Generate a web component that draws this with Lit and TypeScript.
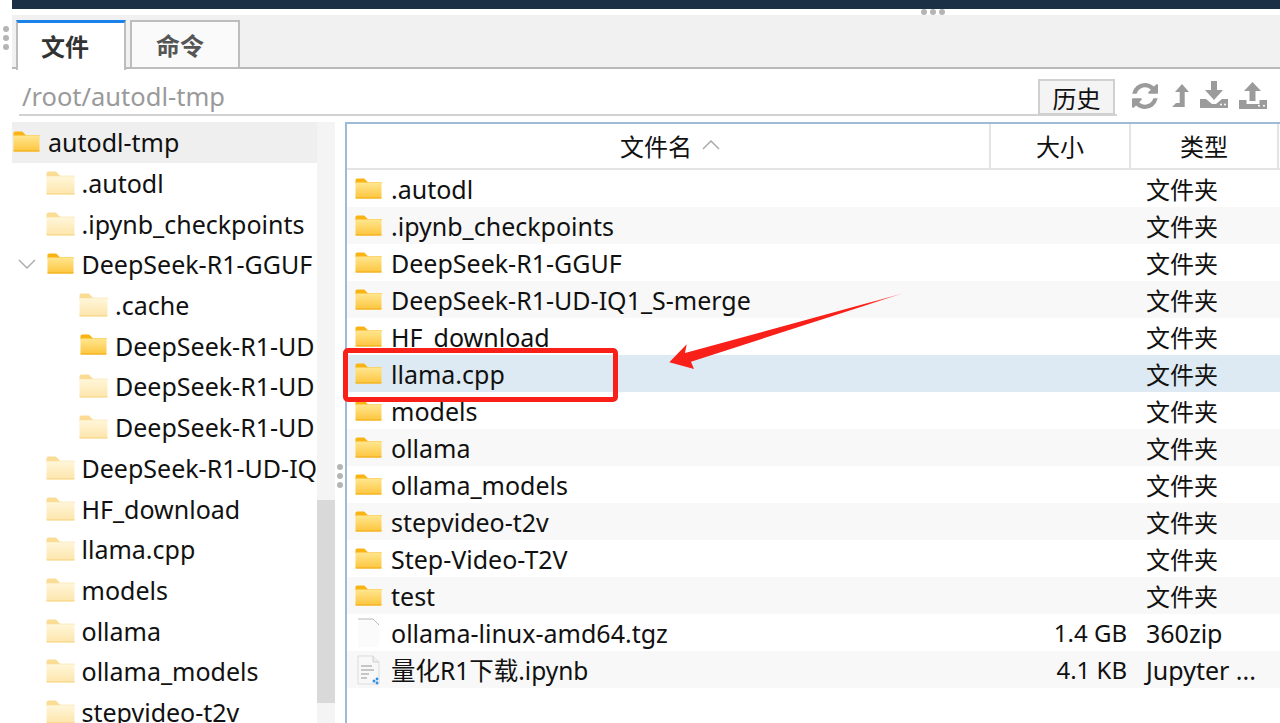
import { LitElement, css, html, svg } from "lit";
import { customElement } from "lit/decorators.js";

type TreeRow = { name: string; depth: number; tone: "solid" | "pale"; open?: boolean; selected?: boolean };
type FileRow = { name: string; size?: string; type: string; icon: "folder" | "blank" | "note"; selected?: boolean };

const treeRows: TreeRow[] = [
  { name: "autodl-tmp", depth: 0, tone: "solid", selected: true },
  { name: ".autodl", depth: 1, tone: "pale" },
  { name: ".ipynb_checkpoints", depth: 1, tone: "pale" },
  { name: "DeepSeek-R1-GGUF", depth: 1, tone: "solid", open: true },
  { name: ".cache", depth: 2, tone: "pale" },
  { name: "DeepSeek-R1-UD", depth: 2, tone: "solid" },
  { name: "DeepSeek-R1-UD", depth: 2, tone: "pale" },
  { name: "DeepSeek-R1-UD", depth: 2, tone: "pale" },
  { name: "DeepSeek-R1-UD-IQ1_S-merge", depth: 1, tone: "pale" },
  { name: "HF_download", depth: 1, tone: "pale" },
  { name: "llama.cpp", depth: 1, tone: "pale" },
  { name: "models", depth: 1, tone: "pale" },
  { name: "ollama", depth: 1, tone: "pale" },
  { name: "ollama_models", depth: 1, tone: "pale" },
  { name: "stepvideo-t2v", depth: 1, tone: "pale" },
];

const fileRows: FileRow[] = [
  { name: ".autodl", type: "文件夹", icon: "folder" },
  { name: ".ipynb_checkpoints", type: "文件夹", icon: "folder" },
  { name: "DeepSeek-R1-GGUF", type: "文件夹", icon: "folder" },
  { name: "DeepSeek-R1-UD-IQ1_S-merge", type: "文件夹", icon: "folder" },
  { name: "HF_download", type: "文件夹", icon: "folder" },
  { name: "llama.cpp", type: "文件夹", icon: "folder", selected: true },
  { name: "models", type: "文件夹", icon: "folder" },
  { name: "ollama", type: "文件夹", icon: "folder" },
  { name: "ollama_models", type: "文件夹", icon: "folder" },
  { name: "stepvideo-t2v", type: "文件夹", icon: "folder" },
  { name: "Step-Video-T2V", type: "文件夹", icon: "folder" },
  { name: "test", type: "文件夹", icon: "folder" },
  { name: "ollama-linux-amd64.tgz", size: "1.4 GB", type: "360zip", icon: "blank" },
  { name: "量化R1下载.ipynb", size: "4.1 KB", type: "Jupyter ...", icon: "note" },
];

const folderIcon = (tone: "solid" | "pale") => {
  const back = tone === "solid" ? "#f9b414" : "#fbdc95";
  const top = tone === "solid" ? "#ffe690" : "#fff6da";
  const bottom = tone === "solid" ? "#fdc53c" : "#fde5ab";
  const edge = tone === "solid" ? "#f2b01e" : "#f9d98f";
  const id = `fold-${tone}`;
  return html`<svg class="folder ${tone}" viewBox="0 0 28 22" preserveAspectRatio="none">
    <defs>
      <linearGradient id=${id} x1="0" y1="0" x2="0" y2="1">
        <stop offset="0" stop-color=${top}></stop>
        <stop offset="1" stop-color=${bottom}></stop>
      </linearGradient>
    </defs>
    <path d="M0.5 5V2.4C0.5 1.3 1.3 0.5 2.4 0.5H9.5L13.5 4.4H27.5V6H0.5z" fill=${back}></path>
    <rect x="0.5" y="4.8" width="27" height="16.7" rx="1.2" fill="url(#${id})"></rect>
    <rect x="0.5" y="20.3" width="27" height="1.2" fill=${edge}></rect>
  </svg>`;
};

const blankIcon = html`<svg class="doc" width="24" height="30" viewBox="0 0 24 30">
  <path d="M2 1h15l6 6v22H2z" fill="#fbfbfb"></path>
  <path d="M2 1h15l6 6" fill="none" stroke="#b9b9b9" stroke-width="1"></path>
</svg>`;

const noteIcon = html`<svg class="doc" width="24" height="30" viewBox="0 0 24 30">
  <path d="M2 1h15l6 6v22H2z" fill="#f8f8f8" stroke="#dcdcdc"></path>
  <path d="M17 1v6h6" fill="#eee" stroke="#cfcfcf"></path>
  <path d="M5 11h11M5 15h13M5 19h8M5 23h6" stroke="#b5b5b5" stroke-width="1.4"></path>
  <circle cx="18" cy="26" r="1.5" fill="#2f8fe0"></circle>
  <circle cx="21" cy="24" r="1.4" fill="#2f8fe0"></circle>
  <circle cx="21" cy="28" r="1.4" fill="#2f8fe0"></circle>
</svg>`;

const toolIcons = [
  {
    w: 26, h: 26, vb: "128 128 1536 1536", top: 14,
    body: svg`<path d="M1639 1056q0 5-1 7-64 268-268 434.5t-478 166.5q-146 0-282.5-55t-243.5-157l-129 129q-19 19-45 19t-45-19-19-45v-448q0-26 19-45t45-19h448q26 0 45 19t19 45-19 45l-137 137q71 66 161 102t187 36q134 0 250-65t186-179q11-17 53-117 8-23 30-23h192q13 0 22.5 9.5t9.5 22.5zm25-800v448q0 26-19 45t-45 19h-448q-26 0-45-19t-19-45 19-45l138-138q-148-137-349-137-134 0-250 65t-186 179q-11 17-53 117-8 23-30 23h-199q-13 0-22.5-9.5t-9.5-22.5v-7q65-268 270-434.5t480-166.5q146 0 284 55.5t245 156.5l130-129q19-19 45-19t45 19 19 45z"/>`,
    gap: 14,
  },
  {
    w: 17, h: 23, vb: "0 0 17 23", top: 15,
    body: svg`<path d="M10 0l7 8h-4.300v15H0l4-4h3.700V8H3z"/>`,
    gap: 11,
  },
  {
    w: 28, h: 27, vb: "0 0 28 27", top: 12,
    body: svg`<path d="M11 0h6v9h6l-9 10-9-10h6zM0 18h6l6 5h4l6-5h6v9H0z"/><circle cx="21" cy="23.500" r="1" fill="#fff"/><circle cx="25" cy="23.500" r="1" fill="#fff"/>`,
    gap: 11,
  },
  {
    w: 28, h: 27, vb: "0 0 28 27", top: 13,
    body: svg`<path d="M13.500 0l8.500 9h-5.500v10h-6V9H5zM0 18h7.500v4h13v-4H28v9H0z"/><circle cx="20" cy="23.800" r="1" fill="#fff"/><circle cx="25" cy="23.800" r="1" fill="#fff"/>`,
    gap: 0,
  },
];

@customElement("app-root")
export class AppRoot extends LitElement {
  static styles = css`
    :host {
      display: block;
      position: relative;
      height: 723px;
      overflow: hidden;
      background: #fff;
      color: #111;
      font-family: "Noto Sans", "Noto Sans CJK SC", sans-serif;
      font-size: 25px;
    }
    .banner {
      height: 9px;
      margin-left: 12px;
      background: #1b3044;
    }
    .shell {
      margin: 6px 0 0 12px;
    }
    .tabs {
      height: 54px;
      background: #f1f1f1;
      border-bottom: 2px solid #b9b9b9;
      display: flex;
      gap: 4px;
      padding: 5px 0 0 4px;
      box-sizing: border-box;
    }
    .tab {
      width: 110px;
      height: 49px;
      box-sizing: border-box;
      border: 2px solid #bdbdbd;
      background: #fafafa;
      display: flex;
      align-items: center;
      justify-content: center;
      padding: 0 10px 0 0;
      font-weight: 700;
      font-size: 24px;
      color: #555;
    }
    .tab.active {
      height: 50px;
      border-top: 3px solid #1a82e8;
      border-bottom: none;
      background: #fff;
      color: #333;
      padding: 0 12px 2px 0;
    }
    .path-row {
      height: 47px;
      margin-left: 7px;
      display: flex;
    }
    .path {
      width: 1098px;
      height: 47px;
      box-sizing: border-box;
      border-bottom: 2px solid #d2d2d2;
      padding: 0 2px 0 3px;
      color: #9a9a9a;
      font-size: 25.500px;
      line-height: 55px;
      display: flex;
      justify-content: space-between;
      align-items: flex-start;
    }
    .history {
      width: 77px;
      height: 36px;
      margin-top: 10px;
      box-sizing: border-box;
      border: 2px solid #d0d0d0;
      background: #f4f4f4;
      color: #111;
      font-size: 24px;
      line-height: 35px;
      text-align: center;
    }
    .tools {
      display: flex;
      align-items: flex-start;
      padding-left: 15px;
    }
    .tools svg {
      fill: #9b9b9b;
      display: block;
      flex: none;
    }
    .body {
      display: flex;
      margin-top: 6px;
      height: 601px;
    }
    .tree {
      width: 305px;
      flex: none;
      overflow: hidden;
    }
    .tree-row {
      height: 40.700px;
      display: flex;
      align-items: center;
      white-space: nowrap;
      overflow: hidden;
    }
    .tree-row.selected {
      background: #efefef;
    }
    .slot {
      width: 29px;
      margin-right: 7px;
      flex: none;
      display: flex;
      justify-content: center;
    }
    .caret {
      width: 18px;
      height: 16px;
      margin-left: -28px;
      margin-right: 10px;
      flex: none;
    }
    .scroll {
      width: 18px;
      flex: none;
      background: #f4f4f4;
      padding-top: 378px;
      box-sizing: border-box;
    }
    .thumb {
      height: 203px;
      background: #d9d9d9;
    }
    .split {
      width: 10px;
      flex: none;
      display: flex;
      flex-direction: column;
      align-items: center;
      gap: 3px;
      padding-top: 342px;
      box-sizing: border-box;
    }
    .dot {
      width: 6px;
      height: 6px;
      border-radius: 50%;
      background: #b5b5b5;
    }
    .table {
      flex: 1;
      border-left: 2px solid #9dbad6;
      border-top: 2px solid #9dbad6;
    }
    .head {
      display: grid;
      grid-template-columns: 644px 140px 148px;
      height: 46px;
      border-bottom: 2px solid #e4e4e4;
      box-sizing: border-box;
      font-size: 24px;
    }
    .head > div {
      display: flex;
      align-items: center;
      justify-content: center;
      gap: 10px;
      border-right: 2px solid #e4e4e4;
      padding-bottom: 2px;
    }
    .head > div:first-child {
      padding-left: 4px;
    }
    .file-row {
      display: grid;
      grid-template-columns: 644px 140px 148px;
      height: 37px;
      align-items: center;
      white-space: nowrap;
    }
    .file-row.alt {
      background: #f8f8f8;
    }
    .file-row.selected {
      background: #deeaf3;
    }
    .cell-name {
      display: flex;
      align-items: center;
      gap: 9px;
      padding-left: 8px;
    }
    .cjk-mix {
      font-size: 24.500px;
    }
    .cell-size {
      text-align: right;
      padding-right: 4px;
      font-size: 24px;
    }
    .cell-type {
      padding-left: 15px;
    }
    .cell-type.cjk {
      font-size: 24px;
    }
    .doc {
      margin: 0 2px 0 1px;
      flex: none;
    }
    .folder {
      flex: none;
      display: block;
    }
    .folder.pale {
      width: 29px;
      height: 24px;
    }
    .folder.solid {
      width: 27px;
      height: 21px;
    }
    .tree-row .folder.solid {
      margin-bottom: 2px;
    }
    .mark {
      position: absolute;
      left: 343px;
      top: 348px;
      width: 275px;
      height: 54px;
      box-sizing: border-box;
      border: 5px solid #f9201a;
      border-radius: 5px;
    }
    .arrow {
      position: absolute;
      left: 660px;
      top: 285px;
    }
    .grip {
      position: absolute;
      display: flex;
      gap: 3px;
    }
    .grip.side {
      left: 3px;
      top: 26px;
      flex-direction: column;
    }
    .grip.top {
      left: 921px;
      top: 9px;
    }
  `;

  render() {
    return html`
      <div class="banner"></div>
      <div class="shell">
        <div class="tabs">
          <div class="tab active">文件</div>
          <div class="tab">命令</div>
        </div>
        <div class="path-row">
          <div class="path">
            <span>/root/autodl-tmp</span>
            <div class="history">历史</div>
          </div>
          <div class="tools">
            ${toolIcons.map(
              (t) => html`<svg
                width=${t.w}
                height=${t.h}
                viewBox=${t.vb}
                style="margin-top:${t.top}px;margin-right:${t.gap}px"
              >${t.body}</svg>`
            )}
          </div>
        </div>
        <div class="body">
          <div class="tree">${treeRows.map((r) => this.renderTreeRow(r))}</div>
          <div class="scroll"><div class="thumb"></div></div>
          <div class="split"><div class="dot"></div><div class="dot"></div><div class="dot"></div></div>
          <div class="table">
            <div class="head">
              <div><span>文件名</span><svg width="18" height="10" viewBox="0 0 18 10"><path d="M1 9l8-8 8 8" fill="none" stroke="#aaa" stroke-width="1.500"></path></svg></div>
              <div>大小</div>
              <div>类型</div>
            </div>
            ${fileRows.map((r, i) => this.renderFileRow(r, i))}
          </div>
        </div>
      </div>
      <div class="grip side"><div class="dot"></div><div class="dot"></div><div class="dot"></div></div>
      <div class="grip top"><div class="dot"></div><div class="dot"></div><div class="dot"></div></div>
      <div class="mark"></div>
      <svg class="arrow" width="250" height="100" viewBox="0 0 250 100">
        <defs>
          <linearGradient id="arrow-fade" x1="1" y1="0" x2="0" y2="1">
            <stop offset="0" stop-color="#fb9a90"></stop>
            <stop offset="0.150" stop-color="#f9201a"></stop>
          </linearGradient>
        </defs>
        <path d="M9.300 77.300L26.700 59.300L25 68L243.300 8.300L31 76.700L34 84z" fill="url(#arrow-fade)"></path>
      </svg>
    `;
  }

  private renderTreeRow(r: TreeRow) {
    return html`<div class="tree-row ${r.selected ? "selected" : ""}" style="padding-left:${r.depth * 33.5}px">
      ${r.open
        ? html`<svg class="caret" viewBox="0 0 18 16"><path d="M1 4l8 8 8-8" fill="none" stroke="#aaa" stroke-width="1.400"></path></svg>`
        : null}
      <div class="slot">${folderIcon(r.tone)}</div><span>${r.name}</span>
    </div>`;
  }

  private renderFileRow(r: FileRow, i: number) {
    const cls = r.selected ? "selected" : i % 2 === 1 ? "alt" : "";
    const icon = r.icon === "folder" ? folderIcon("solid") : r.icon === "blank" ? blankIcon : noteIcon;
    return html`<div class="file-row ${cls}">
      <div class="cell-name">${icon}<span class=${r.icon === "note" ? "cjk-mix" : ""}>${r.name}</span></div>
      <div class="cell-size">${r.size ?? ""}</div>
      <div class="cell-type ${r.icon === "folder" ? "cjk" : ""}">${r.type}</div>
    </div>`;
  }
}
